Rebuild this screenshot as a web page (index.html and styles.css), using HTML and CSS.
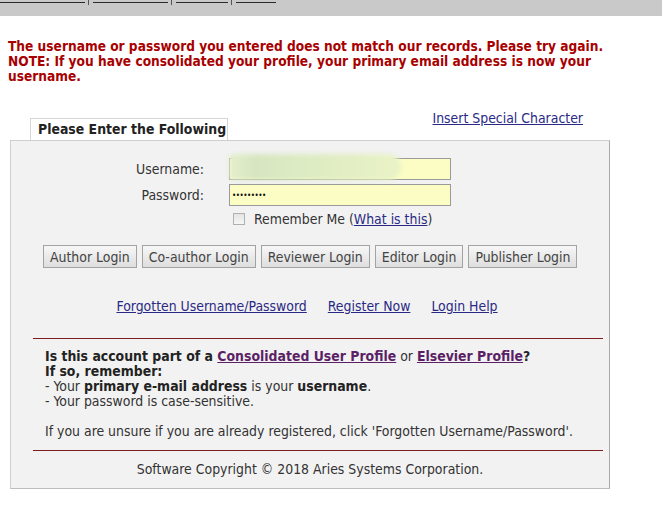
FILE: index.html
```html
<!DOCTYPE html>
<html lang="en">

<head>
    <meta charset="UTF-8">
    <title>Login</title>
    <link rel="stylesheet" href="styles.css">
</head>

<body>
    <div class="topbar">
        <span class="tl w1"></span><span class="sep"></span>
        <span class="tl w2"></span><span class="sep"></span>
        <span class="tl w3"></span><span class="sep"></span>
        <span class="tl w4"></span>
    </div>

    <p class="error">The username or password you entered does not match our records. Please try again.<br>
        NOTE: If you have consolidated your profile, your primary email address is now your username.</p>

    <div class="login">
        <div class="tabrow">
            <div class="tab">Please Enter the Following</div>
            <a class="special" href="#">Insert Special Character</a>
        </div>

        <div class="panel">
            <div class="fields">
                <label for="user">Username:</label>
                <div class="userbox">
                    <input id="user" type="text" value="">
                    <span class="smudge"></span>
                </div>
                <label for="pass">Password:</label>
                <input id="pass" type="password" value="123456789">
                <span></span>
                <div class="remember">
                    <span class="check"></span>
                    <span>Remember Me (<a href="#">What is this</a>)</span>
                </div>
            </div>

            <div class="buttons">
                <button>Author Login</button>
                <button>Co-author Login</button>
                <button>Reviewer Login</button>
                <button>Editor Login</button>
                <button>Publisher Login</button>
            </div>

            <div class="links">
                <a href="#">Forgotten Username/Password</a>
                <a href="#">Register Now</a>
                <a href="#">Login Help</a>
            </div>

            <div class="info">
                <p><b>Is this account part of a <a class="visited" href="#">Consolidated User Profile</a></b> or <b><a class="visited" href="#">Elsevier Profile</a>?<br>
                    If so, remember:</b><br>
                    - Your <b>primary e-mail address</b> is your <b>username</b>.<br>
                    - Your password is case-sensitive.</p>
                <p>If you are unsure if you are already registered, click 'Forgotten Username/Password'.</p>
            </div>

            <p class="copy">Software Copyright © 2018 Aries Systems Corporation.</p>
        </div>
    </div>
</body>

</html>
```

FILE: styles.css
```css
* {
    margin: 0;
    padding: 0;
    box-sizing: border-box;
}

body {
    font-family: "DejaVu Sans Condensed", "DejaVu Sans", sans-serif;
    font-size: 13.9px;
    color: #333;
    background: #fff;
}

a {
    color: #2a2a86;
}

/* cut-off menu bar, only the underlines are left */
.topbar {
    height: 16px;
    background: #c9c9c9;
    display: flex;
    align-items: flex-start;
}

.tl {
    height: 3px;
    border-bottom: 1px solid #2a2a2a;
}

.w1 { width: 85px; }
.w2 { width: 75px; }
.w3 { width: 52px; }
.w4 { width: 40px; }

.sep {
    width: 8px;
    height: 5px;
    position: relative;
}

.sep::after {
    content: "";
    position: absolute;
    left: 3px;
    top: 0;
    width: 1px;
    height: 5px;
    background: #555;
}

.error {
    margin: 23px 0 0 8px;
    font-weight: bold;
    font-size: 13.6px;
    color: #a80000;
    line-height: 15px;
    width: 600px;
}

.login {
    width: 600px;
    margin: 26px 0 0 10px;
}

.tabrow {
    display: flex;
    justify-content: space-between;
    align-items: flex-end;
}

.tab {
    margin-left: 20px;
    width: 198px;
    height: 22px;
    padding: 2px 0 0 7px;
    background: #fff;
    border: 1px solid #d6d6d6;
    border-bottom: none;
    font-weight: bold;
    color: #222;
}

.special {
    margin: 0 27px 14px 0;
}

.panel {
    background: #f2f2f2;
    border: 1px solid #cfcfcf;
    border-right-color: #a9a9a9;
    border-bottom-color: #bdbdbd;
    padding: 17px 0 11px;
}

.fields {
    display: grid;
    grid-template-columns: 193px 222px;
    column-gap: 25px;
    row-gap: 4px;
    align-items: center;
}

.fields label {
    text-align: right;
    color: #333;
}

.userbox {
    position: relative;
}

input {
    display: block;
    width: 222px;
    height: 22px;
    background: #fbfdc4;
    border: 1px solid #9a9a9a;
    font-family: inherit;
    font-size: 13px;
    padding: 0 2px;
}

#pass {
    font-size: 8px;
    letter-spacing: -0.5px;
    color: #111;
}

.smudge {
    position: absolute;
    left: 0;
    top: -4px;
    width: 172px;
    height: 26px;
    background: linear-gradient(90deg, #e6efcf 0%, #d7e6c0 15%, #dcebc3 40%, #e3eec4 70%, #eaf3c6 100%);
    border-radius: 4px 14px 14px 4px;
    filter: blur(2px);
}

.remember {
    display: flex;
    align-items: center;
    gap: 9px;
    margin: 1px 0 0 4px;
    white-space: nowrap;
}

.check {
    width: 12px;
    height: 12px;
    border: 1px solid #b0b0b0;
    background: linear-gradient(#e4e4e4, #f6f6f6);
}

.buttons {
    display: flex;
    gap: 5px;
    margin: 18px 0 0 32px;
}

button {
    height: 23px;
    padding: 0 6px;
    font-family: inherit;
    font-size: 13.9px;
    color: #444;
    background: linear-gradient(#f7f7f7, #dedede);
    border: 1px solid #a3a3a3;
}

.links {
    display: flex;
    justify-content: center;
    gap: 21px;
    margin: 30px 0 0 -6px;
}

.info {
    margin: 24px 6px 0 22px;
    padding: 10px 0 11px 12px;
    border-top: 1px solid #7c1c1c;
    border-bottom: 1px solid #7c1c1c;
    line-height: 15px;
}

.info p + p {
    margin-top: 15px;
}

.info b {
    color: #222;
}

.info .visited {
    color: #5b1f66;
}

.copy {
    text-align: center;
    margin-top: 10px;
}
```
